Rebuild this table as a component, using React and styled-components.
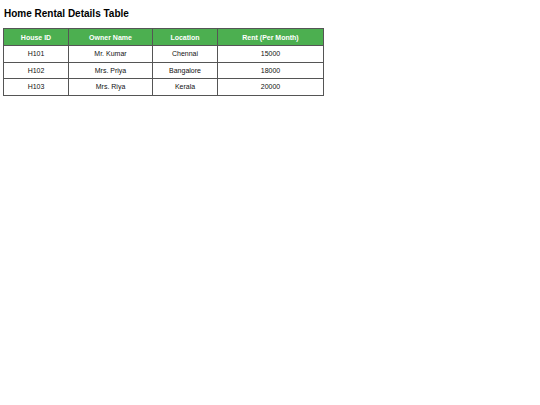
import React from 'react';
import styled, { createGlobalStyle } from 'styled-components';

const GlobalStyle = createGlobalStyle`
  body {
    margin: 0;
    padding: 4px 3px;
    font-family: "Liberation Sans", Arial, sans-serif;
    background: #ffffff;
  }
`;

const Title = styled.h2`
  margin: 4px 0 8px 1px;
  font-size: 10px;
  line-height: 12px;
  font-weight: bold;
  color: #000;
`;

const Table = styled.table`
  border-collapse: collapse;
  table-layout: fixed;
`;

const Th = styled.th`
  background: #4caf50;
  color: #ffffff;
  font-size: 7px;
  font-weight: bold;
  height: 16px;
  padding: 0;
  border: 1px solid #555;
  text-align: center;
  width: ${(p) => p.w}px;
`;

const Td = styled.td`
  font-size: 7px;
  color: #111;
  height: 15.5px;
  padding: 0;
  border: 1px solid #555;
  text-align: center;
`;

const rows = [
  ['H101', 'Mr. Kumar', 'Chennai', '15000'],
  ['H102', 'Mrs. Priya', 'Bangalore', '18000'],
  ['H103', 'Mrs. Riya', 'Kerala', '20000'],
];

const App = () => (
  <>
    <GlobalStyle />
    <Title>Home Rental Details Table</Title>
    <Table>
      <thead>
        <tr>
          <Th w={64}>House ID</Th>
          <Th w={83}>Owner Name</Th>
          <Th w={64}>Location</Th>
          <Th w={105}>Rent (Per Month)</Th>
        </tr>
      </thead>
      <tbody>
        {rows.map((r) => (
          <tr key={r[0]}>
            {r.map((c, i) => <Td key={i}>{c}</Td>)}
          </tr>
        ))}
      </tbody>
    </Table>
  </>
);

export default App;
